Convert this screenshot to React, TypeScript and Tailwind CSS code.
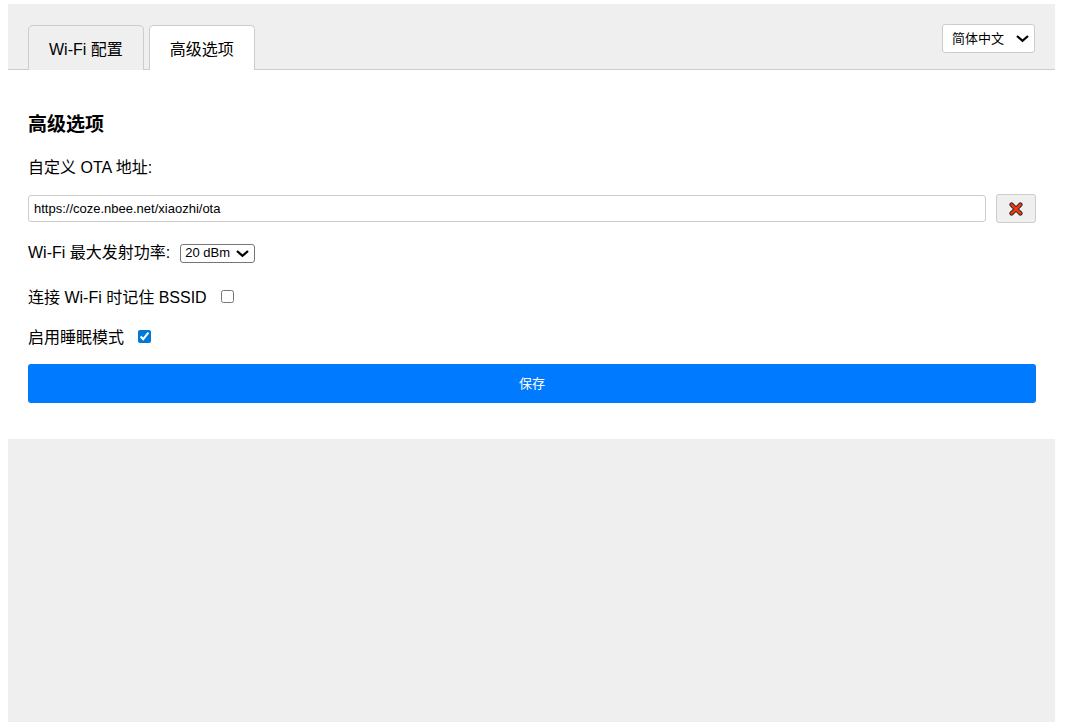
import { useState } from "react";
import type { ComponentProps } from "react";
import clsx from "clsx";

const ClearIcon = () => (
  <svg width="16" height="16" viewBox="0 0 16 16" fill="none" strokeLinecap="round" aria-hidden="true">
    <path d="M3.6 3.6 12.4 12.4M12.4 3.6 3.6 12.4" stroke="#2b2b2b" strokeWidth="4.4" />
    <path d="M3.6 3.6 12.4 12.4M12.4 3.6 3.6 12.4" stroke="#f5380d" strokeWidth="2.4" />
  </svg>
);

// native select with its own, larger arrow laid over the right end
const Select = ({ className, ...props }: ComponentProps<"select">) => (
  <span className="relative flex">
    <select className={clsx("appearance-none rounded-[3px] border bg-white text-[13px]", className)} {...props} />
    <svg
      className="pointer-events-none absolute inset-y-0 right-1.5 my-auto"
      width="13"
      height="9"
      viewBox="0 0 13 9"
      fill="none"
      stroke="#000"
      strokeWidth="2.3"
      aria-hidden="true"
    >
      <path d="M1 2 6.5 6.8 12 2" />
    </svg>
  </span>
);

const powerLevels = ["20 dBm", "18 dBm", "15 dBm", "11 dBm", "8 dBm"];

const App = () => {
  const [otaUrl, setOtaUrl] = useState("https://coze.nbee.net/xiaozhi/ota");
  const [rememberBssid, setRememberBssid] = useState(false);
  const [sleepMode, setSleepMode] = useState(true);

  return (
    <div className="flex min-h-screen flex-col bg-white pt-1 pr-2.5 pb-1.5 pl-2 font-['Liberation_Sans','Noto_Sans_CJK_SC',sans-serif] text-base text-black">
      <div className="flex-1 bg-[#efefef]">
        <header className="flex items-start justify-between border-b border-[#ccc] px-5 pt-5">
          <nav className="-mb-px flex gap-[5px] pt-px">
            <button type="button" className="h-[45px] rounded-t-[5px] border border-b-0 border-[#ccc] bg-[#efefef] px-5 pt-1">
              Wi-Fi 配置
            </button>
            <button type="button" className="h-[45px] rounded-t-[5px] border border-b-0 border-[#ccc] bg-white px-5 pt-1">
              高级选项
            </button>
          </nav>
          <Select aria-label="语言" className="h-[29px] border-[#ccc] pr-[29px] pl-[9px]">
            <option>简体中文</option>
            <option>English</option>
          </Select>
        </header>

        <form className="flex flex-col bg-white pt-[43px] pr-[19px] pb-9 pl-5 leading-6" onSubmit={(e) => e.preventDefault()}>
          <h3 className="text-[19px] leading-6 font-bold">高级选项</h3>
          <label htmlFor="ota-url" className="mt-[19px]">自定义 OTA 地址:</label>
          <div className="mt-3.5 flex items-center gap-2.5">
            <input
              id="ota-url"
              type="text"
              value={otaUrl}
              onChange={(e) => setOtaUrl(e.target.value)}
              className="h-[27px] min-w-0 flex-1 rounded-[3px] border border-[#ccc] px-[5px] text-[13px]"
            />
            <button
              type="button"
              aria-label="清除"
              onClick={() => setOtaUrl("")}
              className="flex h-[29px] w-10 items-center justify-center rounded-[3px] border border-[#ccc] bg-[#efefef]"
            >
              <ClearIcon />
            </button>
          </div>

          <div className="mt-[18px] flex items-center gap-2.5">
            <label htmlFor="tx-power">Wi-Fi 最大发射功率:</label>
            <Select id="tx-power" className="h-[19px] border-[#767676] pr-6 pl-1 leading-4">
              {powerLevels.map((level) => (
                <option key={level}>{level}</option>
              ))}
            </Select>
          </div>

          <div className="mt-[21px] flex items-start gap-3.5">
            <label htmlFor="bssid">连接 Wi-Fi 时记住 BSSID</label>
            <input id="bssid" type="checkbox" checked={rememberBssid} onChange={(e) => setRememberBssid(e.target.checked)} className="mt-1 size-[13px] accent-[#0078d7]" />
          </div>
          <div className="mt-4 flex items-start gap-3.5">
            <label htmlFor="sleep">启用睡眠模式</label>
            <input id="sleep" type="checkbox" checked={sleepMode} onChange={(e) => setSleepMode(e.target.checked)} className="mt-1 size-[13px] accent-[#0078d7]" />
          </div>

          <button type="submit" className="mt-3.5 h-[39px] rounded-[3px] bg-[#007bff] text-[13px] text-white">
            保存
          </button>
        </form>
      </div>
    </div>
  );
};

export default App;
